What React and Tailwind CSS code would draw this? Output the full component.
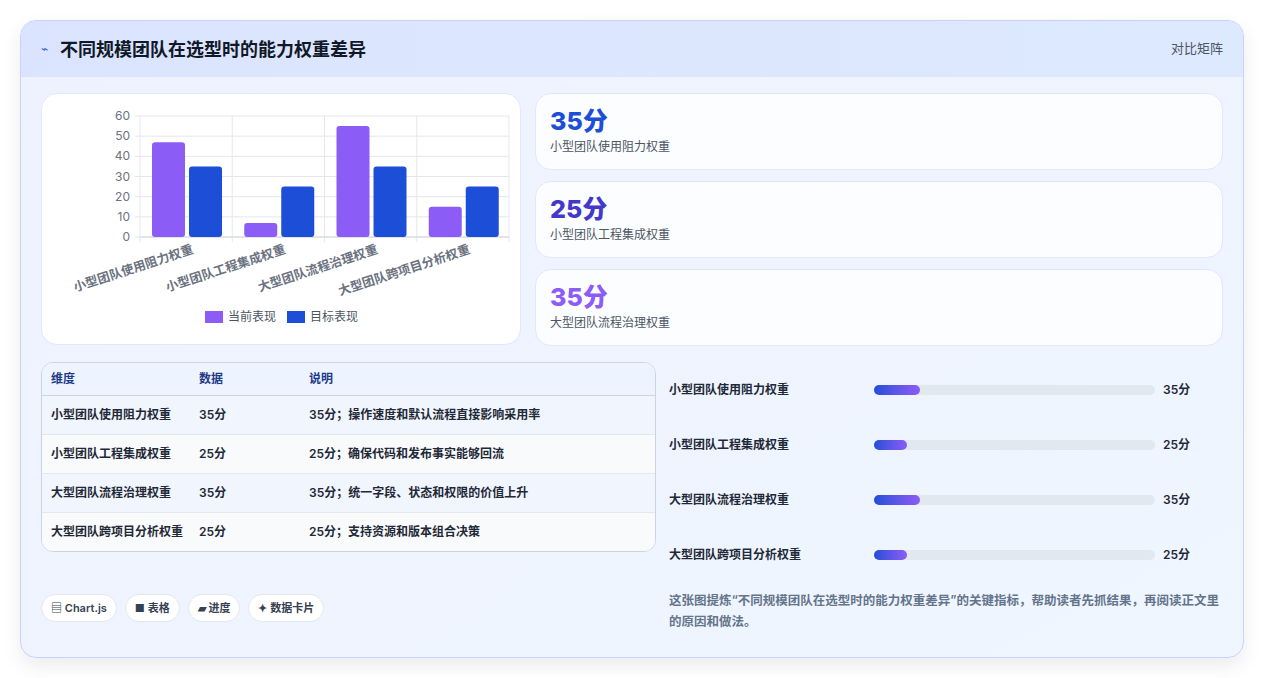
import React from 'react';

const cats = ['小型团队使用阻力权重', '小型团队工程集成权重', '大型团队流程治理权重', '大型团队跨项目分析权重'];
const cur = [47, 7, 55, 15];
const tgt = [35, 25, 35, 25];

const Chart = () => {
  const x0 = 98, x1 = 467, top = 22, bot = 143;
  const h = (v) => (v / 60) * (bot - top);
  const cw = (x1 - x0) / 4;
  return (
    <svg width="478" height="250" className="block">
      {[0, 10, 20, 30, 40, 50, 60].map((v) => {
        const y = bot - h(v);
        return (
          <g key={v}>
            <line x1={x0 - 5} x2={x1} y1={y} y2={y} stroke="#e5e7eb" />
            <text x={x0 - 10} y={y + 4} textAnchor="end" fontSize="12" fill="#6b7280">{v}</text>
          </g>
        );
      })}
      {[0, 1, 2, 3, 4].map((i) => (
        <line key={i} x1={x0 + i * cw} x2={x0 + i * cw} y1={top} y2={bot + 5} stroke="#e5e7eb" />
      ))}
      <line x1={x0} x2={x1} y1={bot} y2={bot} stroke="#d1d5db" />
      {cats.map((c, i) => {
        const bx = x0 + i * cw + 12;
        return (
          <g key={c}>
            <rect x={bx} y={bot - h(cur[i])} width="33" height={h(cur[i])} rx="3" fill="#8b5cf6" />
            <rect x={bx + 37} y={bot - h(tgt[i])} width="33" height={h(tgt[i])} rx="3" fill="#1d4ed8" />
            <text x={x0 + i * cw + cw / 2 + 8} y={bot + 16} textAnchor="end" fontSize="12.5" fontWeight="600" fill="#6b7280" transform={`rotate(-18 ${x0 + i * cw + cw / 2 + 8} ${bot + 16})`}>{c}</text>
          </g>
        );
      })}
      <rect x="163" y="217" width="18" height="12" fill="#8b5cf6" />
      <text x="186" y="227" fontSize="12" fill="#4b5563">当前表现</text>
      <rect x="245" y="217" width="18" height="12" fill="#1d4ed8" />
      <text x="268" y="227" fontSize="12" fill="#4b5563">目标表现</text>
    </svg>
  );
};

const kpis = [
  ['35分', '小型团队使用阻力权重', 'text-[#1d4ed8]'],
  ['25分', '小型团队工程集成权重', 'text-[#4338ca]'],
  ['35分', '大型团队流程治理权重', 'text-[#8b5cf6]'],
];

const rows = [
  ['小型团队使用阻力权重', '35分', '35分；操作速度和默认流程直接影响采用率'],
  ['小型团队工程集成权重', '25分', '25分；确保代码和发布事实能够回流'],
  ['大型团队流程治理权重', '35分', '35分；统一字段、状态和权限的价值上升'],
  ['大型团队跨项目分析权重', '25分', '25分；支持资源和版本组合决策'],
];

const bars = [
  ['小型团队使用阻力权重', 46, '35分'],
  ['小型团队工程集成权重', 33, '25分'],
  ['大型团队流程治理权重', 46, '35分'],
  ['大型团队跨项目分析权重', 33, '25分'],
];

export default function App() {
  return (
    <div className="min-h-screen bg-white p-5 pt-5 text-[#1f2937]" style={{ fontFamily: 'Inter, "Noto Sans CJK SC", sans-serif' }}>
      <div className="rounded-2xl border border-[#c7d2fe] bg-gradient-to-br from-[#eef2ff] to-[#eff6ff] shadow-[0_8px_20px_rgba(0,0,0,0.08)] overflow-hidden h-[638px]">
        <div className="h-[56px] flex items-center justify-between px-5 bg-gradient-to-r from-[#dbe4fe] to-[#dde9fe]">
          <div className="flex items-center gap-3">
            <span className="text-[#3b5bdb] text-xs">⌁</span>
            <h1 className="text-[18px] font-bold text-[#111827]">不同规模团队在选型时的能力权重差异</h1>
          </div>
          <span className="text-[13px] text-[#4b5563]">对比矩阵</span>
        </div>
        <div className="px-5 pt-4">
          <div className="flex gap-[14px]">
            <div className="w-[480px] h-[252px] rounded-2xl bg-white border border-[#e0e7ff]">
              <Chart />
            </div>
            <div className="flex-1 flex flex-col gap-[11px]">
              {kpis.map(([v, l, c]) => (
                <div key={l} className="h-[77px] rounded-2xl bg-white/80 border border-[#e0e7ff] px-[14px] pt-[10px]">
                  <div className={`text-[25px] font-extrabold leading-[34px] ${c}`}>{v}</div>
                  <div className="text-[12px] text-[#4b5563]">{l}</div>
                </div>
              ))}
            </div>
          </div>
          <div className="flex gap-[13px] mt-4">
            <div className="w-[615px]">
              <div className="rounded-xl border border-[#cbd5e1] bg-white overflow-hidden text-[12px]">
                <div className="grid grid-cols-[148px_110px_1fr] h-[33px] items-center px-[9px] bg-[#eef4ff] text-[#1e3a8a] font-semibold border-b border-[#cbd5e1]">
                  <span>维度</span><span>数据</span><span>说明</span>
                </div>
                {rows.map((r, i) => (
                  <div key={r[0]} className={`grid grid-cols-[148px_110px_1fr] px-[9px] py-[10px] min-h-[38px] font-semibold text-[#1f2937] border-b last:border-b-0 border-[#e5e7eb] ${i % 2 ? 'bg-[#f8fafc]' : 'bg-[#f1f5fd]'}`}>
                    <span className="leading-[18px] pr-2">{r[0]}</span><span>{r[1]}</span><span>{r[2]}</span>
                  </div>
                ))}
              </div>
              <div className="flex gap-2 mt-[42px]">
                {['▤ Chart.js', '■ 表格', '▰ 进度', '✦ 数据卡片'].map((t) => (
                  <span key={t} className="h-[28px] px-[9px] flex items-center rounded-full bg-white border border-[#e5e7eb] text-[11px] font-semibold text-[#374151]">{t}</span>
                ))}
              </div>
            </div>
            <div className="flex-1">
              {bars.map(([l, w, v]) => (
                <div key={l} className="h-[55px] flex items-center text-[12px] font-semibold">
                  <span className="w-[205px]">{l}</span>
                  <div className="w-[281px] h-[10px] rounded-full bg-[#e2e8f0]">
                    <div className="h-full rounded-full bg-gradient-to-r from-[#1d4ed8] to-[#8b5cf6]" style={{ width: w }} />
                  </div>
                  <span className="ml-2">{v}</span>
                </div>
              ))}
              <p className="mt-2 text-[12.5px] leading-[21px] font-semibold text-[#64748b]">这张图提炼“不同规模团队在选型时的能力权重差异”的关键指标，帮助读者先抓结果，再阅读正文里的原因和做法。</p>
            </div>
          </div>
        </div>
      </div>
    </div>
  );
}
